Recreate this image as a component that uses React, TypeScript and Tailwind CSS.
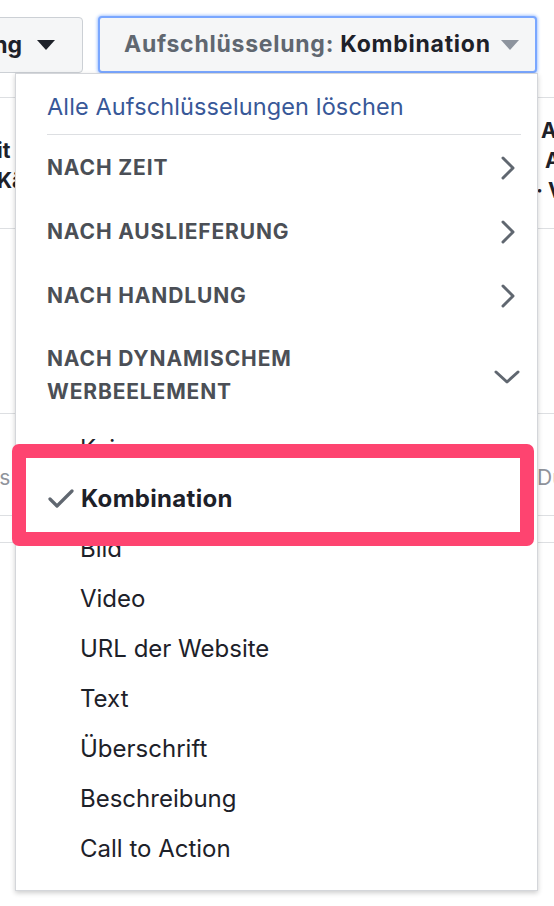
import React from "react";

const font = { fontFamily: "Inter, 'Noto Sans', sans-serif" };

function ChevronRight() {
  return (
    <svg width="16" height="24" viewBox="0 0 16 24" className="shrink-0">
      <path d="M3 2 L13 12 L3 22" fill="none" stroke="#606770" strokeWidth="3" strokeLinecap="round" strokeLinejoin="round" />
    </svg>
  );
}

function ChevronDown() {
  return (
    <svg width="26" height="16" viewBox="0 0 26 16" className="shrink-0">
      <path d="M2 3 L13 13 L24 3" fill="none" stroke="#606770" strokeWidth="3" strokeLinecap="round" strokeLinejoin="round" />
    </svg>
  );
}

function Check() {
  return (
    <svg width="26" height="20" viewBox="0 0 26 20" className="shrink-0">
      <path d="M2 10 L9 17 L24 2" fill="none" stroke="#606770" strokeWidth="3.2" strokeLinecap="round" strokeLinejoin="round" />
    </svg>
  );
}

function Caret({ color }: { color: string }) {
  return (
    <svg width="20" height="12" viewBox="0 0 20 12" className="shrink-0">
      <path d="M1 1 L19 1 L10 11 Z" fill={color} />
    </svg>
  );
}

export default function App() {
  const headers = ["NACH ZEIT", "NACH AUSLIEFERUNG", "NACH HANDLUNG"];
  const items = ["Video", "URL der Website", "Text", "Überschrift", "Beschreibung", "Call to Action"];
  return (
    <div className="relative w-[554px] h-[906px] bg-white overflow-hidden" style={font}>
      {/* Background page */}
      <div className="flex flex-col">
        <div className="h-[97px] flex items-start pt-[17px]">
          <div className="ml-[-20px] w-[103px] h-[56px] rounded-[4px] border border-[#ccd0d5] bg-[#f5f6f7] flex items-center justify-end pr-[26px] gap-[14px]">
            <span className="text-[23px] font-bold text-[#1d2129]">ng</span>
            <Caret color="#1d2129" />
          </div>
          <div className="ml-[15px] w-[439px] h-[57px] mt-[-1px] rounded-[4px] border-2 border-[#7aa7ff] shadow-[0_0_3px_1px_rgba(66,133,255,0.45)] bg-[#f5f6f7] flex items-center pl-[24px] gap-[9px]">
            <span className="text-[23px] font-bold text-[#606770] tracking-[0.75px] whitespace-nowrap">
              Aufschlüsselung: <span className="text-[#1d2129]">Kombination</span>
            </span>
            <Caret color="#8d949e" />
          </div>
        </div>
        <div className="h-[131px] border-t border-[#dddfe2] flex justify-between">
          <div className="flex flex-col pt-[38px] text-[21px] font-bold text-[#1d2129] leading-[30px]">
            <span className="ml-[-3px]">it</span>
            <span className="ml-[-3px]">Kä</span>
          </div>
          <div className="flex flex-col pt-[18px] text-[21px] font-bold text-[#1d2129] leading-[30px] w-[16px]">
            <span className="ml-[3px]">A</span>
            <span className="ml-[7px]">A</span>
            <span className="ml-[-2px] whitespace-nowrap">· V</span>
          </div>
        </div>
        <div className="h-[185px] border-t border-[#dddfe2]" />
        <div className="h-[102px] border-t border-[#dddfe2] flex justify-between items-center pt-[26px]">
          <span className="text-[21px] text-[#90949c] ml-[-13px]">es</span>
          <span className="text-[21px] text-[#90949c] w-[17px] overflow-hidden">Du</span>
        </div>
        <div className="h-[27px] border-t border-[#dddfe2]" />
        <div className="border-t border-[#dddfe2]" />
      </div>

      {/* Dropdown menu */}
      <div className="absolute left-[15px] top-[73px] w-[523px] h-[818px] bg-white border border-[#d4d6da] shadow-[0_2px_5px_rgba(0,0,0,0.2)] flex flex-col">
        <div className="h-[60px] pl-[31px] pt-[18px]">
          <span className="text-[23.5px] leading-[30px] text-[#385898] tracking-[0.12px] whitespace-nowrap">Alle Aufschlüsselungen löschen</span>
        </div>
        <div className="ml-[31px] mr-[16px] h-px bg-[#dddfe2] mb-px" />
        {headers.map((h) => (
          <div key={h} className="h-[64px] pl-[31px] pr-[21px] flex items-center justify-between">
            <span className="text-[21px] font-bold text-[#4b4f56] tracking-[0.85px]">{h}</span>
            <ChevronRight />
          </div>
        ))}
        <div className="h-[96px] pl-[31px] pr-[17px] pt-[14px] flex items-center justify-between">
          <span className="text-[21px] font-bold text-[#4b4f56] leading-[33px] tracking-[0.85px] self-start">
            NACH DYNAMISCHEM
            <br />
            WERBEELEMENT
          </span>
          <div className="mt-[-12px]">
            <ChevronDown />
          </div>
        </div>
        <div className="h-[50px] pl-[64px] flex items-center text-[24px] text-[#1d2129]">Keine</div>
        <div className="h-[50px] pl-[32px] flex items-center gap-[7px] text-[24px] font-bold text-[#1d2129]">
          <Check />
          <span className="tracking-[0.3px]">Kombination</span>
        </div>
        <div className="h-[50px] pl-[64px] flex items-center text-[24px] text-[#1d2129]">Bild</div>
        {items.map((it) => (
          <div key={it} className="h-[50px] pl-[64px] flex items-center text-[24px] text-[#1d2129]">
            {it}
          </div>
        ))}
      </div>

      {/* Highlight box */}
      <div className="absolute left-[12px] top-[444px] w-[522px] h-[102px] border-[14px] border-[#fe4470] rounded-[7px]" />
    </div>
  );
}
